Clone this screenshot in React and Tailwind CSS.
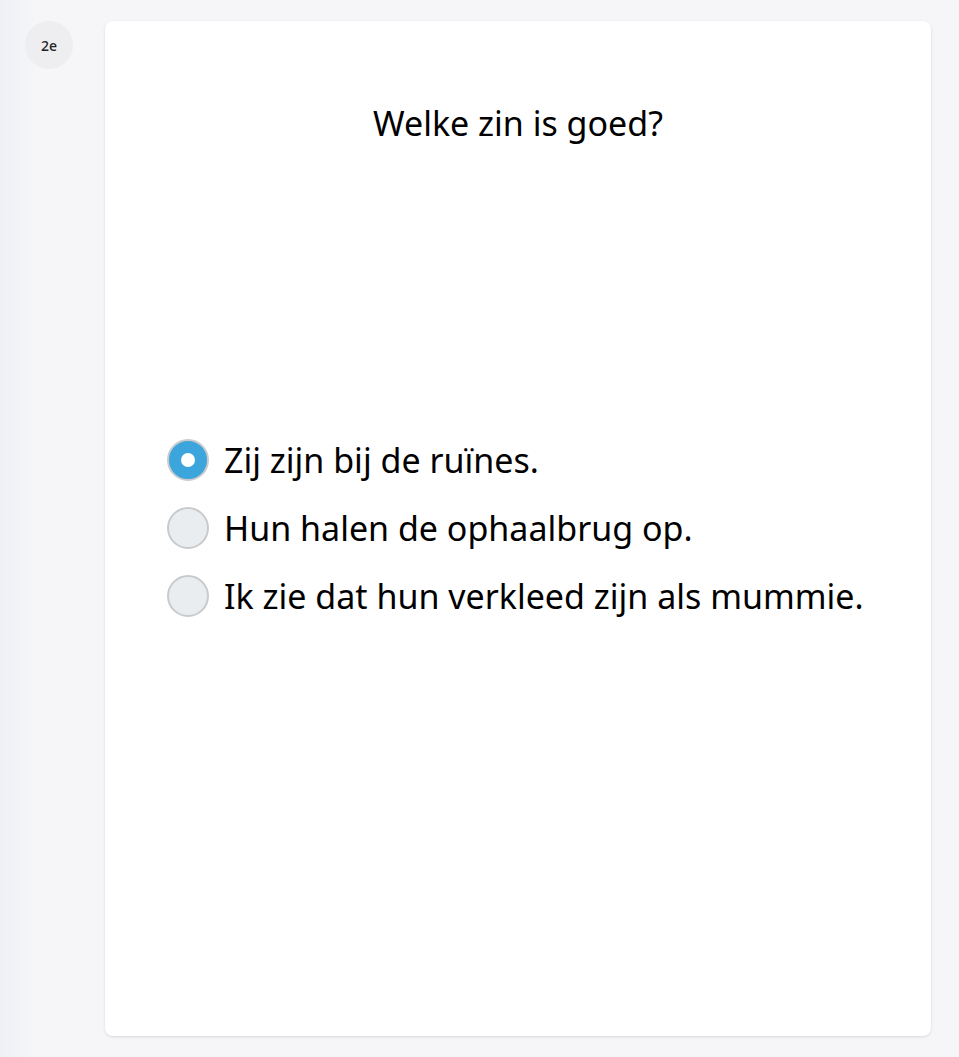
import React, { useState } from 'react';

const options = [
  'Zij zijn bij de ruïnes.',
  'Hun halen de ophaalbrug op.',
  'Ik zie dat hun verkleed zijn als mummie.',
];

const Radio = ({ checked }) => (
  <span
    className={`flex h-[42px] w-[42px] shrink-0 items-center justify-center rounded-full border-2 border-[#c9cacc] ${
      checked ? 'bg-[#3ba5dc]' : 'bg-[#e9edf0]'
    }`}
  >
    {checked && <span className="h-[14px] w-[14px] rounded-full bg-white" />}
  </span>
);

export default function App() {
  const [selected, setSelected] = useState(0);

  return (
    <div
      className="flex min-h-[1057px] bg-[#f6f6f8] text-black"
      style={{ fontFamily: '"Noto Sans", "Open Sans", sans-serif' }}
    >
      <div className="w-[105px] shrink-0 bg-gradient-to-r from-[#eef0f5] to-[#f6f6f8] to-[35%] pt-[21px] pl-[25px]">
        <div className="flex h-[48px] w-[48px] items-center justify-center rounded-full bg-[#eeeef0] text-[14px] font-medium text-[#222]">
          2e
        </div>
      </div>
      <div className="mt-[21px] mb-[21px] h-[1015px] w-[826px] rounded-lg bg-white shadow-[0_1px_3px_rgba(0,0,0,0.12)]">
        <h1 className="pt-[76px] text-center text-[34px] leading-[52px] font-normal">Welke zin is goed?</h1>
        <div className="mt-[290px] flex flex-col gap-[26px] pl-[62px]">
          {options.map((opt, i) => (
            <label
              key={opt}
              className="flex cursor-pointer items-center gap-[15px]"
              onClick={() => setSelected(i)}
            >
              <Radio checked={selected === i} />
              <span className="text-[34px] leading-[42px]">{opt}</span>
            </label>
          ))}
        </div>
      </div>
    </div>
  );
}
